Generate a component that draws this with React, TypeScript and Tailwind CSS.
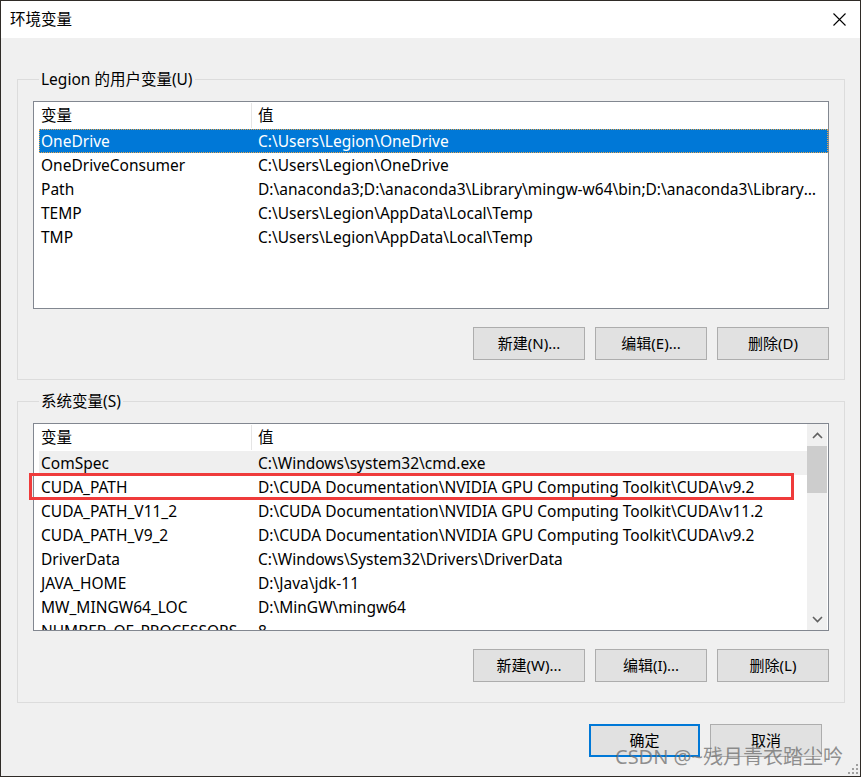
import React from "react";

const FONT = "font-['Noto_Sans','Noto_Sans_CJK_SC',sans-serif]";

type Row = { name: string; value: string };

const userVars: Row[] = [
  { name: "OneDrive", value: "C:\\Users\\Legion\\OneDrive" },
  { name: "OneDriveConsumer", value: "C:\\Users\\Legion\\OneDrive" },
  {
    name: "Path",
    value:
      "D:\\anaconda3;D:\\anaconda3\\Library\\mingw-w64\\bin;D:\\anaconda3\\Library\\usr\\bin;D:\\anaconda3\\Library\\bin;D:\\anaconda3\\Scripts",
  },
  { name: "TEMP", value: "C:\\Users\\Legion\\AppData\\Local\\Temp" },
  { name: "TMP", value: "C:\\Users\\Legion\\AppData\\Local\\Temp" },
];

const sysVars: Row[] = [
  { name: "ComSpec", value: "C:\\Windows\\system32\\cmd.exe" },
  { name: "CUDA_PATH", value: "D:\\CUDA Documentation\\NVIDIA GPU Computing Toolkit\\CUDA\\v9.2" },
  { name: "CUDA_PATH_V11_2", value: "D:\\CUDA Documentation\\NVIDIA GPU Computing Toolkit\\CUDA\\v11.2" },
  { name: "CUDA_PATH_V9_2", value: "D:\\CUDA Documentation\\NVIDIA GPU Computing Toolkit\\CUDA\\v9.2" },
  { name: "DriverData", value: "C:\\Windows\\System32\\Drivers\\DriverData" },
  { name: "JAVA_HOME", value: "D:\\Java\\jdk-11" },
  { name: "MW_MINGW64_LOC", value: "D:\\MinGW\\mingw64" },
  { name: "NUMBER_OF_PROCESSORS", value: "8" },
];

function Header() {
  return (
    <div className="flex h-[27px] shrink-0 items-center bg-white">
      <div className="flex h-full w-[217px] items-center pl-[7px] pt-px">变量</div>
      <div className="h-[25px] w-px bg-[#e5e5e5]" />
      <div className="flex h-full flex-1 items-center pl-[6px] pt-px">值</div>
    </div>
  );
}

function ListRow({ row, mode }: { row: Row; mode: "none" | "selected" | "hover" }) {
  const base = "ml-[5px] flex h-[24px] min-w-0 shrink-0 items-center pt-px";
  const cls =
    mode === "selected"
      ? `${base} bg-[#0078d7] text-white border border-dotted border-[#e9a54a]`
      : mode === "hover"
      ? `${base} bg-[#efefef] border border-transparent`
      : `${base} border border-transparent`;
  return (
    <div className={cls}>
      <div className="w-[211px] shrink-0 truncate pl-[1px]">{row.name}</div>
      <div className="min-w-0 flex-1 truncate pl-[7px] pr-[8px]">{row.value}</div>
    </div>
  );
}

function Btn({ label, primary }: { label: string; primary?: boolean }) {
  return (
    <div
      className={
        primary
          ? "flex h-[33px] w-[111px] items-center justify-center border-2 border-[#0078d7] bg-[#e1e1e1] text-[15px]"
          : "flex h-[33px] w-[112px] items-center justify-center border border-[#adadad] bg-[#e1e1e1] text-[15px]"
      }
    >
      {label}
    </div>
  );
}

function ChevronUp() {
  return (
    <svg width="11" height="7" viewBox="0 0 11 7">
      <path d="M1 6 L5.5 1.5 L10 6" fill="none" stroke="#606060" strokeWidth="1.6" />
    </svg>
  );
}

function ChevronDown() {
  return (
    <svg width="11" height="7" viewBox="0 0 11 7">
      <path d="M1 1 L5.5 5.5 L10 1" fill="none" stroke="#606060" strokeWidth="1.6" />
    </svg>
  );
}

export default function App() {
  return (
    <div className={`${FONT} relative h-[777px] w-[861px] overflow-hidden border border-[#2f2b27] bg-[#f0f0f0] text-[15.5px] text-black`}>
      {/* title bar */}
      <div className="flex h-[37px] items-center justify-between bg-white pl-[9px] pr-[14px]">
        <span className="text-[15.5px]">环境变量</span>
        <svg width="13" height="13" viewBox="0 0 13 13">
          <path d="M0.5 0.5 L12.5 12.5 M12.5 0.5 L0.5 12.5" stroke="#000" strokeWidth="1.1" />
        </svg>
      </div>

      <div className="flex flex-col pl-[16px] pr-[15px]">
        {/* user vars */}
        <fieldset className="mt-[31px] min-w-0 border border-[#dcdcdc] px-[15px] pb-[19px] pt-[12px]">
          <legend className="ml-[6px] px-[2px] leading-[20px]">Legion 的用户变量(U)</legend>
          <div className="flex h-[208px] min-w-0 flex-col overflow-hidden border border-[#828790] bg-white">
            <Header />
            {userVars.map((r, i) => (
              <ListRow key={r.name} row={r} mode={i === 0 ? "selected" : "none"} />
            ))}
          </div>
          <div className="mt-[18px] flex justify-end gap-[10px]">
            <Btn label="新建(N)..." />
            <Btn label="编辑(E)..." />
            <Btn label="删除(D)" />
          </div>
        </fieldset>

        {/* system vars */}
        <fieldset className="mt-[11px] min-w-0 border border-[#dcdcdc] px-[15px] pb-[20px] pt-[12px]">
          <legend className="ml-[6px] px-[2px] leading-[20px]">系统变量(S)</legend>
          <div className="flex h-[208px] min-w-0 overflow-hidden border border-[#828790] bg-white">
            <div className="flex min-w-0 flex-1 flex-col overflow-hidden">
              <Header />
              {sysVars.map((r, i) => (
                <ListRow key={r.name} row={r} mode={i === 0 ? "hover" : "none"} />
              ))}
            </div>
            <div className="mr-[1px] flex w-[20px] shrink-0 flex-col items-stretch bg-[#f0f0f0]">
              <div className="flex h-[22px] items-center justify-center">
                <ChevronUp />
              </div>
              <div className="h-[47px] bg-[#cdcdcd]" />
              <div className="flex-1" />
              <div className="flex h-[22px] items-center justify-center">
                <ChevronDown />
              </div>
            </div>
          </div>
          <div className="mt-[18px] flex justify-end gap-[10px]">
            <Btn label="新建(W)..." />
            <Btn label="编辑(I)..." />
            <Btn label="删除(L)" />
          </div>
        </fieldset>

        <div className="mt-[21px] flex justify-end gap-[10px] pr-[23px]">
          <Btn label="确定" primary />
          <Btn label="取消" />
        </div>
      </div>

      {/* red annotation box */}
      <div className="pointer-events-none absolute left-[28px] top-[472px] h-[27px] w-[765px] border-[3px] border-[#ef3b3b]" />

      {/* watermark */}
      <div className="pointer-events-none absolute left-[614px] top-[744px] whitespace-nowrap text-[20px] leading-[24px] text-[rgba(110,110,110,0.75)]">
        CSDN @~残月青衣踏尘吟
      </div>

      {/* resize grip */}
      <svg className="absolute bottom-[1px] right-[1px]" width="12" height="12" viewBox="0 0 12 12">
        {[
          [9, 1],
          [9, 5],
          [5, 5],
          [9, 9],
          [5, 9],
          [1, 9],
        ].map(([x, y], i) => (
          <rect key={i} x={x} y={y} width="2" height="2" fill="#a0a0a0" />
        ))}
      </svg>
    </div>
  );
}
